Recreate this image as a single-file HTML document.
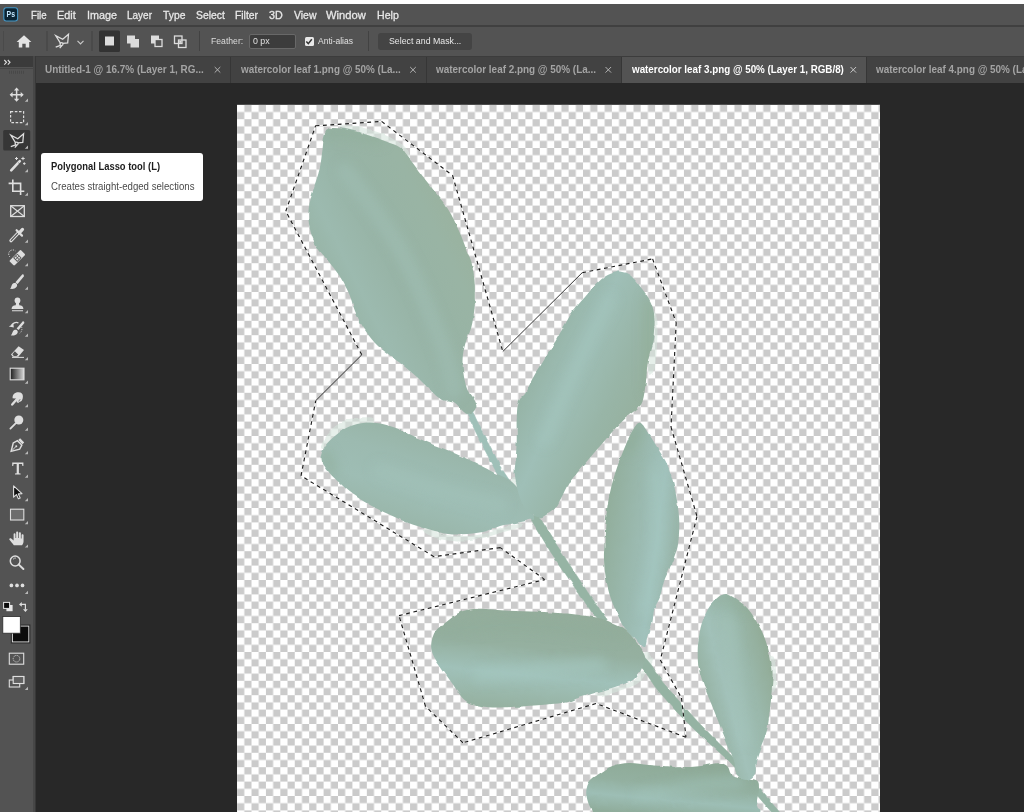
<!DOCTYPE html>
<html><head><meta charset="utf-8"><style>
*{margin:0;padding:0;box-sizing:border-box}
html,body{width:1024px;height:812px;overflow:hidden;background:#282828;font-family:"Liberation Sans",sans-serif;}
#root{position:relative;width:1024px;height:812px;overflow:hidden;background:#282828}
.abs{position:absolute}
.tx{position:absolute;white-space:nowrap;transform-origin:0 50%;line-height:1.15}
</style></head><body><div id="root">

<svg class="abs" style="left:0;top:0" width="1024" height="812" viewBox="0 0 1024 812">
<defs><pattern id="chk" x="237.1" y="104.8" width="14.414" height="14.4" patternUnits="userSpaceOnUse"><rect width="14.414" height="14.4" fill="#fff"/><rect x="7.207" width="7.207" height="7.2" fill="#cbcbcb"/><rect y="7.2" width="7.207" height="7.2" fill="#cbcbcb"/></pattern>
<clipPath id="cv"><rect x="237" y="104.8" width="643" height="708"/></clipPath>
<filter id="soft" x="-2%" y="-2%" width="104%" height="104%"><feTurbulence type="fractalNoise" baseFrequency="0.09" numOctaves="2" seed="4" result="n"/><feDisplacementMap in="SourceGraphic" in2="n" scale="3" xChannelSelector="R" yChannelSelector="G" result="d"/><feGaussianBlur in="d" stdDeviation="0.5"/></filter>
<filter id="blur4" filterUnits="userSpaceOnUse" x="200" y="80" width="720" height="760"><feGaussianBlur stdDeviation="6"/></filter>
<linearGradient id="g1" gradientUnits="userSpaceOnUse" x1="318" y1="300" x2="470" y2="225"><stop offset="0" stop-color="#94b0a0"/><stop offset="0.25" stop-color="#9cbaaf"/><stop offset="0.5" stop-color="#97b3a5"/><stop offset="0.8" stop-color="#99b4a4"/><stop offset="1" stop-color="#9ab29e"/></linearGradient>
<linearGradient id="g2" gradientUnits="userSpaceOnUse" x1="450" y1="420" x2="410" y2="540"><stop offset="0" stop-color="#95b0a0"/><stop offset="0.4" stop-color="#9cbab0"/><stop offset="0.65" stop-color="#9ebdb4"/><stop offset="1" stop-color="#97b3a5"/></linearGradient>
<linearGradient id="g3" gradientUnits="userSpaceOnUse" x1="520" y1="370" x2="650" y2="430"><stop offset="0" stop-color="#93b0a1"/><stop offset="0.35" stop-color="#9fbfb7"/><stop offset="0.65" stop-color="#98b5a7"/><stop offset="1" stop-color="#95ae9a"/></linearGradient>
<linearGradient id="g4" gradientUnits="userSpaceOnUse" x1="604" y1="530" x2="680" y2="540"><stop offset="0" stop-color="#92ae9c"/><stop offset="0.45" stop-color="#9bbab0"/><stop offset="0.7" stop-color="#a1c2bc"/><stop offset="1" stop-color="#97b3a6"/></linearGradient>
<linearGradient id="g5" gradientUnits="userSpaceOnUse" x1="540" y1="608" x2="530" y2="708"><stop offset="0" stop-color="#94ad9b"/><stop offset="0.4" stop-color="#95b0a0"/><stop offset="0.68" stop-color="#a0c1b9"/><stop offset="1" stop-color="#96b2a2"/></linearGradient>
<linearGradient id="g6" gradientUnits="userSpaceOnUse" x1="660" y1="762" x2="655" y2="815"><stop offset="0" stop-color="#8eaa97"/><stop offset="0.4" stop-color="#93b0a0"/><stop offset="0.7" stop-color="#9dbeb5"/><stop offset="1" stop-color="#90ad9c"/></linearGradient>
<linearGradient id="g7" gradientUnits="userSpaceOnUse" x1="698" y1="690" x2="772" y2="670"><stop offset="0" stop-color="#93af9e"/><stop offset="0.35" stop-color="#a2c1b9"/><stop offset="0.7" stop-color="#9ab8ab"/><stop offset="1" stop-color="#92ac98"/></linearGradient>
</defs>
<rect x="237" y="104.8" width="643" height="708" fill="url(#chk)"/>
<g clip-path="url(#cv)">
<g filter="url(#soft)">
<path d="M340.0 126.0 C342.5 125.3 352.5 125.5 360.0 127.0 C367.5 128.5 377.7 131.8 385.0 135.0 C392.3 138.2 399.8 142.2 404.0 146.0 C408.2 149.8 411.0 157.3 410.0 158.0 C409.0 158.7 404.7 153.3 398.0 150.0 C391.3 146.7 378.8 141.2 370.0 138.0 C361.2 134.8 350.0 133.0 345.0 131.0 C340.0 129.0 337.5 126.7 340.0 126.0Z" fill="#d6e4dc" opacity="0.6"/>
<path d="M321.0 447.0 C321.3 444.3 324.8 436.5 329.0 432.0 C333.2 427.5 339.2 422.4 346.0 420.0 C352.8 417.6 365.7 416.8 370.0 417.5 C374.3 418.2 375.3 422.2 372.0 424.0 C368.7 425.8 356.0 425.8 350.0 428.0 C344.0 430.2 339.8 433.7 336.0 437.0 C332.2 440.3 329.5 446.3 327.0 448.0 C324.5 449.7 320.7 449.7 321.0 447.0Z" fill="#d6e4dc" opacity="0.6"/>
<path d="M428.0 529.0 C431.8 529.3 441.2 533.8 447.8 535.0 C454.4 536.2 461.0 536.3 467.5 536.0 C474.0 535.7 480.8 534.5 487.0 533.0 C493.2 531.5 499.5 528.7 505.0 527.0 C510.5 525.3 517.3 523.0 520.0 523.0 C522.7 523.0 524.3 525.3 521.0 527.0 C517.7 528.7 508.5 530.7 500.0 533.0 C491.5 535.3 479.2 539.8 470.0 541.0 C460.8 542.2 452.5 541.3 445.0 540.0 C437.5 538.7 427.8 534.8 425.0 533.0 C422.2 531.2 424.2 528.7 428.0 529.0Z" fill="#d6e4dc" opacity="0.6"/>
<path d="M652.0 312.0 C653.0 308.3 656.2 312.5 657.0 318.0 C657.8 323.5 657.5 336.0 657.0 345.0 C656.5 354.0 655.5 367.5 654.0 372.0 C652.5 376.5 648.5 377.3 648.0 372.0 C647.5 366.7 650.3 350.0 651.0 340.0 C651.7 330.0 651.0 315.7 652.0 312.0Z" fill="#d6e4dc" opacity="0.6"/>
<path d="M598.0 692.0 C601.3 690.3 614.0 688.0 620.0 686.0 C626.0 684.0 630.3 682.5 634.0 680.0 C637.7 677.5 640.2 672.0 642.0 671.0 C643.8 670.0 645.8 671.8 645.0 674.0 C644.2 676.2 641.2 681.2 637.0 684.0 C632.8 686.8 626.2 688.5 620.0 690.5 C613.8 692.5 603.7 695.8 600.0 696.0 C596.3 696.2 594.7 693.7 598.0 692.0Z" fill="#d6e4dc" opacity="0.6"/>
<path d="M770.0 655.0 C770.5 653.3 774.0 657.0 775.0 662.0 C776.0 667.0 776.5 680.0 776.0 685.0 C775.5 690.0 772.7 694.2 772.0 692.0 C771.3 689.8 772.3 678.2 772.0 672.0 C771.7 665.8 769.5 656.7 770.0 655.0Z" fill="#d6e4dc" opacity="0.6"/>
<path d="M511.0 480.0 C511.5 478.5 515.7 477.0 517.0 478.0 C518.3 479.0 519.5 484.5 519.0 486.0 C518.5 487.5 515.3 488.0 514.0 487.0 C512.7 486.0 510.5 481.5 511.0 480.0Z" fill="#d6e4dc" opacity="0.6"/>
<path d="M642.0 655.0 C642.8 653.0 646.2 651.2 648.0 652.0 C649.8 652.8 653.0 657.3 653.0 660.0 C653.0 662.7 649.7 667.3 648.0 668.0 C646.3 668.7 644.0 666.2 643.0 664.0 C642.0 661.8 641.2 657.0 642.0 655.0Z" fill="#d6e4dc" opacity="0.6"/>
<path d="M465.3 410.3 L479.3 439.3 L494.4 468.5 L509.3 491.8 L514.7 488.2 L499.6 465.5 L484.7 436.7 L470.7 407.7Z" fill="#9fc0b8" stroke="#9fc0b8" stroke-width="0.6" stroke-linejoin="round"/>
<path d="M530.3 518.1 L532.4 521.7 L550.3 551.4 L580.7 596.3 L597.7 620.3 L600.8 624.4 L607.2 619.6 L604.3 615.7 L587.3 591.7 L557.7 546.6 L539.6 517.3 L537.7 513.9Z" fill="#96b4a4" stroke="#96b4a4" stroke-width="0.6" stroke-linejoin="round"/>
<path d="M637.6 663.0 L644.4 670.7 L656.1 688.3 L676.9 712.0 L694.6 729.8 L712.8 746.4 L729.0 760.9 L743.1 776.6 L746.9 773.4 L733.0 757.1 L717.2 741.6 L700.2 724.2 L683.5 706.0 L663.1 682.7 L651.6 665.3 L644.4 657.0Z" fill="#95b3a3" stroke="#95b3a3" stroke-width="0.6" stroke-linejoin="round"/>
<path d="M750.7 788.0 L763.7 803.0 L775.7 817.0 L780.3 813.0 L768.3 799.0 L755.3 784.0Z" fill="#97b5a6" stroke="#97b5a6" stroke-width="0.6" stroke-linejoin="round"/>
<clipPath id="lc0"><path d="M329.0 128.5 C333.1 127.5 342.3 128.5 349.0 129.7 C355.7 130.9 362.4 133.5 369.0 135.6 C375.6 137.7 383.3 140.5 388.5 142.5 C393.7 144.5 396.8 145.0 400.0 147.4 C403.2 149.8 403.3 151.1 408.0 157.0 C412.7 162.9 421.4 174.4 428.0 183.0 C434.6 191.6 442.4 200.3 447.6 208.5 C452.9 216.7 456.2 224.8 459.5 232.0 C462.8 239.2 465.3 247.0 467.3 252.0 C469.3 257.0 470.2 257.3 471.4 262.0 C472.6 266.7 473.8 274.5 474.4 280.0 C475.0 285.5 474.8 290.2 474.8 295.0 C474.8 299.8 475.0 303.7 474.4 309.0 C473.8 314.3 472.9 321.3 471.4 327.0 C469.9 332.7 467.0 337.8 465.5 343.0 C464.0 348.2 462.9 353.3 462.6 358.5 C462.3 363.7 462.7 368.8 463.5 374.0 C464.3 379.2 465.7 385.7 467.5 390.0 C469.3 394.3 472.9 397.3 474.4 400.0 C475.9 402.7 476.6 404.1 476.4 406.0 C476.2 407.9 474.9 410.4 473.4 411.7 C471.9 413.0 469.1 413.7 467.5 413.7 C465.9 413.7 465.8 413.6 463.5 411.7 C461.2 409.8 457.3 403.9 453.7 402.0 C450.1 400.1 445.9 402.0 442.0 400.0 C438.1 398.0 434.0 393.7 430.0 390.0 C426.0 386.3 422.3 381.9 418.0 378.0 C413.7 374.1 409.3 370.3 404.4 366.4 C399.5 362.5 393.6 358.5 388.7 354.6 C383.8 350.7 379.3 347.6 375.0 343.0 C370.7 338.4 366.3 332.3 363.0 327.0 C359.7 321.7 357.3 316.6 355.0 311.0 C352.7 305.4 351.6 299.4 349.0 293.5 C346.4 287.6 342.7 281.1 339.4 275.8 C336.1 270.6 332.8 267.0 329.0 262.0 C325.2 257.0 319.7 251.7 316.5 246.0 C313.3 240.3 311.0 234.2 309.7 228.0 C308.4 221.8 308.0 215.0 308.7 208.5 C309.4 202.0 311.8 195.4 313.6 188.8 C315.4 182.2 318.1 175.6 319.6 169.0 C321.1 162.4 321.7 155.0 322.5 149.4 C323.3 143.8 323.4 139.1 324.5 135.6 C325.6 132.1 324.9 129.5 329.0 128.5Z"/></clipPath>
<path d="M329.0 128.5 C333.1 127.5 342.3 128.5 349.0 129.7 C355.7 130.9 362.4 133.5 369.0 135.6 C375.6 137.7 383.3 140.5 388.5 142.5 C393.7 144.5 396.8 145.0 400.0 147.4 C403.2 149.8 403.3 151.1 408.0 157.0 C412.7 162.9 421.4 174.4 428.0 183.0 C434.6 191.6 442.4 200.3 447.6 208.5 C452.9 216.7 456.2 224.8 459.5 232.0 C462.8 239.2 465.3 247.0 467.3 252.0 C469.3 257.0 470.2 257.3 471.4 262.0 C472.6 266.7 473.8 274.5 474.4 280.0 C475.0 285.5 474.8 290.2 474.8 295.0 C474.8 299.8 475.0 303.7 474.4 309.0 C473.8 314.3 472.9 321.3 471.4 327.0 C469.9 332.7 467.0 337.8 465.5 343.0 C464.0 348.2 462.9 353.3 462.6 358.5 C462.3 363.7 462.7 368.8 463.5 374.0 C464.3 379.2 465.7 385.7 467.5 390.0 C469.3 394.3 472.9 397.3 474.4 400.0 C475.9 402.7 476.6 404.1 476.4 406.0 C476.2 407.9 474.9 410.4 473.4 411.7 C471.9 413.0 469.1 413.7 467.5 413.7 C465.9 413.7 465.8 413.6 463.5 411.7 C461.2 409.8 457.3 403.9 453.7 402.0 C450.1 400.1 445.9 402.0 442.0 400.0 C438.1 398.0 434.0 393.7 430.0 390.0 C426.0 386.3 422.3 381.9 418.0 378.0 C413.7 374.1 409.3 370.3 404.4 366.4 C399.5 362.5 393.6 358.5 388.7 354.6 C383.8 350.7 379.3 347.6 375.0 343.0 C370.7 338.4 366.3 332.3 363.0 327.0 C359.7 321.7 357.3 316.6 355.0 311.0 C352.7 305.4 351.6 299.4 349.0 293.5 C346.4 287.6 342.7 281.1 339.4 275.8 C336.1 270.6 332.8 267.0 329.0 262.0 C325.2 257.0 319.7 251.7 316.5 246.0 C313.3 240.3 311.0 234.2 309.7 228.0 C308.4 221.8 308.0 215.0 308.7 208.5 C309.4 202.0 311.8 195.4 313.6 188.8 C315.4 182.2 318.1 175.6 319.6 169.0 C321.1 162.4 321.7 155.0 322.5 149.4 C323.3 143.8 323.4 139.1 324.5 135.6 C325.6 132.1 324.9 129.5 329.0 128.5Z" fill="url(#g1)"/>
<clipPath id="lc1"><path d="M320.7 457.0 C321.2 454.1 323.1 448.9 325.6 445.3 C328.1 441.7 331.6 438.6 335.5 435.5 C339.4 432.4 344.4 428.7 349.3 426.6 C354.2 424.5 360.1 423.2 365.0 422.7 C369.9 422.1 373.9 422.5 378.8 423.3 C383.7 424.1 389.4 425.7 394.6 427.6 C399.9 429.5 404.7 432.0 410.3 434.5 C415.9 437.0 421.8 439.8 428.0 442.4 C434.2 445.0 441.2 447.4 447.8 450.2 C454.4 453.0 461.6 456.2 467.5 459.0 C473.4 461.8 478.4 464.5 483.3 467.0 C488.2 469.5 492.9 472.0 497.0 474.0 C501.1 476.0 504.8 477.0 508.0 479.0 C511.2 481.0 513.0 482.5 516.0 486.0 C519.0 489.5 523.0 494.7 526.0 500.0 C529.0 505.3 533.4 514.7 534.0 518.0 C534.6 521.3 532.6 519.2 529.6 520.0 C526.6 520.8 520.7 522.0 515.8 523.0 C510.9 524.0 504.8 524.7 500.0 526.0 C495.2 527.3 492.6 529.7 487.2 531.0 C481.8 532.3 474.1 533.5 467.5 534.0 C460.9 534.5 454.4 534.8 447.8 534.0 C441.2 533.2 434.6 530.8 428.0 529.0 C421.4 527.2 414.9 525.5 408.4 523.0 C401.8 520.5 395.3 517.4 388.7 514.3 C382.1 511.2 374.9 507.7 369.0 504.4 C363.1 501.1 358.1 498.2 353.2 494.6 C348.3 491.0 343.3 486.4 339.4 482.8 C335.5 479.2 332.4 476.2 329.6 472.9 C326.8 469.6 324.2 465.6 322.7 463.0 C321.2 460.4 320.2 459.9 320.7 457.0Z"/></clipPath>
<path d="M320.7 457.0 C321.2 454.1 323.1 448.9 325.6 445.3 C328.1 441.7 331.6 438.6 335.5 435.5 C339.4 432.4 344.4 428.7 349.3 426.6 C354.2 424.5 360.1 423.2 365.0 422.7 C369.9 422.1 373.9 422.5 378.8 423.3 C383.7 424.1 389.4 425.7 394.6 427.6 C399.9 429.5 404.7 432.0 410.3 434.5 C415.9 437.0 421.8 439.8 428.0 442.4 C434.2 445.0 441.2 447.4 447.8 450.2 C454.4 453.0 461.6 456.2 467.5 459.0 C473.4 461.8 478.4 464.5 483.3 467.0 C488.2 469.5 492.9 472.0 497.0 474.0 C501.1 476.0 504.8 477.0 508.0 479.0 C511.2 481.0 513.0 482.5 516.0 486.0 C519.0 489.5 523.0 494.7 526.0 500.0 C529.0 505.3 533.4 514.7 534.0 518.0 C534.6 521.3 532.6 519.2 529.6 520.0 C526.6 520.8 520.7 522.0 515.8 523.0 C510.9 524.0 504.8 524.7 500.0 526.0 C495.2 527.3 492.6 529.7 487.2 531.0 C481.8 532.3 474.1 533.5 467.5 534.0 C460.9 534.5 454.4 534.8 447.8 534.0 C441.2 533.2 434.6 530.8 428.0 529.0 C421.4 527.2 414.9 525.5 408.4 523.0 C401.8 520.5 395.3 517.4 388.7 514.3 C382.1 511.2 374.9 507.7 369.0 504.4 C363.1 501.1 358.1 498.2 353.2 494.6 C348.3 491.0 343.3 486.4 339.4 482.8 C335.5 479.2 332.4 476.2 329.6 472.9 C326.8 469.6 324.2 465.6 322.7 463.0 C321.2 460.4 320.2 459.9 320.7 457.0Z" fill="url(#g2)"/>
<clipPath id="lc2"><path d="M615.0 272.6 C617.5 271.9 618.4 271.2 621.0 271.7 C623.6 272.2 627.2 272.9 630.5 275.5 C633.8 278.1 637.2 282.6 640.6 287.0 C644.0 291.4 648.5 297.1 650.8 302.2 C653.1 307.3 654.0 311.5 654.4 317.4 C654.8 323.3 654.0 332.0 653.3 337.8 C652.6 343.6 651.0 347.7 650.0 352.0 C649.0 356.3 648.3 358.2 647.6 363.4 C646.9 368.6 646.5 376.8 645.7 383.0 C644.9 389.2 644.1 396.3 642.8 400.5 C641.5 404.7 640.8 405.1 638.0 408.0 C635.2 410.9 630.0 414.1 626.0 417.7 C622.0 421.3 618.2 425.3 614.3 429.6 C610.4 433.9 606.5 438.7 602.5 443.3 C598.5 447.9 594.6 452.4 590.6 457.0 C586.6 461.6 582.6 466.4 578.8 471.0 C575.0 475.6 571.0 480.1 568.0 484.7 C565.0 489.3 563.2 494.6 561.0 498.5 C558.8 502.4 557.3 505.8 555.0 508.4 C552.7 511.0 549.9 512.8 547.3 514.3 C544.7 515.8 542.6 517.6 539.4 517.2 C536.2 516.8 531.2 515.2 528.0 512.0 C524.8 508.8 522.2 504.2 520.0 498.0 C517.8 491.8 515.5 481.5 514.8 475.0 C514.1 468.5 515.5 464.9 515.8 459.0 C516.1 453.1 516.6 445.9 516.7 439.4 C516.9 432.8 516.4 425.9 516.7 419.7 C517.0 413.5 517.0 406.4 518.5 402.0 C520.0 397.6 523.0 397.1 525.5 393.0 C528.0 388.9 530.3 382.5 533.3 377.2 C536.2 371.9 539.9 366.7 543.2 361.4 C546.5 356.1 549.7 351.2 553.0 345.6 C556.3 340.0 559.7 333.7 563.0 328.0 C566.3 322.3 569.2 316.3 572.8 311.2 C576.4 306.1 580.7 301.9 584.6 297.4 C588.5 292.9 592.8 287.6 596.4 284.0 C600.0 280.4 602.9 277.9 606.0 276.0 C609.1 274.1 612.5 273.3 615.0 272.6Z"/></clipPath>
<path d="M615.0 272.6 C617.5 271.9 618.4 271.2 621.0 271.7 C623.6 272.2 627.2 272.9 630.5 275.5 C633.8 278.1 637.2 282.6 640.6 287.0 C644.0 291.4 648.5 297.1 650.8 302.2 C653.1 307.3 654.0 311.5 654.4 317.4 C654.8 323.3 654.0 332.0 653.3 337.8 C652.6 343.6 651.0 347.7 650.0 352.0 C649.0 356.3 648.3 358.2 647.6 363.4 C646.9 368.6 646.5 376.8 645.7 383.0 C644.9 389.2 644.1 396.3 642.8 400.5 C641.5 404.7 640.8 405.1 638.0 408.0 C635.2 410.9 630.0 414.1 626.0 417.7 C622.0 421.3 618.2 425.3 614.3 429.6 C610.4 433.9 606.5 438.7 602.5 443.3 C598.5 447.9 594.6 452.4 590.6 457.0 C586.6 461.6 582.6 466.4 578.8 471.0 C575.0 475.6 571.0 480.1 568.0 484.7 C565.0 489.3 563.2 494.6 561.0 498.5 C558.8 502.4 557.3 505.8 555.0 508.4 C552.7 511.0 549.9 512.8 547.3 514.3 C544.7 515.8 542.6 517.6 539.4 517.2 C536.2 516.8 531.2 515.2 528.0 512.0 C524.8 508.8 522.2 504.2 520.0 498.0 C517.8 491.8 515.5 481.5 514.8 475.0 C514.1 468.5 515.5 464.9 515.8 459.0 C516.1 453.1 516.6 445.9 516.7 439.4 C516.9 432.8 516.4 425.9 516.7 419.7 C517.0 413.5 517.0 406.4 518.5 402.0 C520.0 397.6 523.0 397.1 525.5 393.0 C528.0 388.9 530.3 382.5 533.3 377.2 C536.2 371.9 539.9 366.7 543.2 361.4 C546.5 356.1 549.7 351.2 553.0 345.6 C556.3 340.0 559.7 333.7 563.0 328.0 C566.3 322.3 569.2 316.3 572.8 311.2 C576.4 306.1 580.7 301.9 584.6 297.4 C588.5 292.9 592.8 287.6 596.4 284.0 C600.0 280.4 602.9 277.9 606.0 276.0 C609.1 274.1 612.5 273.3 615.0 272.6Z" fill="url(#g3)"/>
<clipPath id="lc3"><path d="M640.0 422.7 C643.0 423.4 646.5 430.8 649.8 435.5 C653.1 440.2 656.6 446.3 659.6 451.2 C662.6 456.1 665.2 459.7 667.5 465.0 C669.8 470.3 671.8 476.6 673.4 482.8 C675.0 489.1 676.3 495.9 677.3 502.5 C678.3 509.1 679.1 515.6 679.3 522.2 C679.5 528.8 678.8 536.9 678.3 541.9 C677.8 546.9 677.4 547.7 676.0 552.0 C674.6 556.3 672.0 562.7 670.0 567.6 C668.0 572.5 665.7 576.5 664.0 581.4 C662.3 586.3 661.6 592.4 660.0 597.0 C658.4 601.6 655.6 604.7 654.3 609.0 C653.0 613.3 653.4 618.2 652.3 622.8 C651.1 627.4 648.7 632.4 647.4 636.6 C646.1 640.8 646.3 647.4 644.4 648.0 C642.5 648.6 639.3 643.2 636.0 640.0 C632.7 636.8 627.7 632.9 624.7 628.7 C621.7 624.5 620.1 620.0 617.8 615.0 C615.5 610.0 613.0 604.9 611.0 599.0 C609.0 593.1 607.2 585.9 606.0 579.4 C604.8 572.9 604.3 565.3 604.0 559.7 C603.7 554.1 604.2 551.4 604.4 545.8 C604.6 540.2 604.9 532.6 605.4 526.0 C605.9 519.4 606.4 512.9 607.4 506.4 C608.4 499.8 609.7 493.3 611.3 486.7 C612.9 480.1 615.1 473.2 617.2 467.0 C619.3 460.8 621.5 455.2 624.0 449.3 C626.5 443.4 629.3 435.9 632.0 431.5 C634.7 427.1 637.0 422.0 640.0 422.7Z"/></clipPath>
<path d="M640.0 422.7 C643.0 423.4 646.5 430.8 649.8 435.5 C653.1 440.2 656.6 446.3 659.6 451.2 C662.6 456.1 665.2 459.7 667.5 465.0 C669.8 470.3 671.8 476.6 673.4 482.8 C675.0 489.1 676.3 495.9 677.3 502.5 C678.3 509.1 679.1 515.6 679.3 522.2 C679.5 528.8 678.8 536.9 678.3 541.9 C677.8 546.9 677.4 547.7 676.0 552.0 C674.6 556.3 672.0 562.7 670.0 567.6 C668.0 572.5 665.7 576.5 664.0 581.4 C662.3 586.3 661.6 592.4 660.0 597.0 C658.4 601.6 655.6 604.7 654.3 609.0 C653.0 613.3 653.4 618.2 652.3 622.8 C651.1 627.4 648.7 632.4 647.4 636.6 C646.1 640.8 646.3 647.4 644.4 648.0 C642.5 648.6 639.3 643.2 636.0 640.0 C632.7 636.8 627.7 632.9 624.7 628.7 C621.7 624.5 620.1 620.0 617.8 615.0 C615.5 610.0 613.0 604.9 611.0 599.0 C609.0 593.1 607.2 585.9 606.0 579.4 C604.8 572.9 604.3 565.3 604.0 559.7 C603.7 554.1 604.2 551.4 604.4 545.8 C604.6 540.2 604.9 532.6 605.4 526.0 C605.9 519.4 606.4 512.9 607.4 506.4 C608.4 499.8 609.7 493.3 611.3 486.7 C612.9 480.1 615.1 473.2 617.2 467.0 C619.3 460.8 621.5 455.2 624.0 449.3 C626.5 443.4 629.3 435.9 632.0 431.5 C634.7 427.1 637.0 422.0 640.0 422.7Z" fill="url(#g4)"/>
<clipPath id="lc4"><path d="M431.4 643.2 C432.0 639.9 432.7 635.0 435.3 631.4 C437.9 627.8 442.7 624.8 447.0 621.5 C451.3 618.2 455.6 613.8 460.9 611.7 C466.2 609.6 470.8 608.9 478.7 608.7 C486.6 608.5 498.4 610.2 508.2 610.7 C518.0 611.2 527.9 611.2 537.8 611.7 C547.6 612.2 558.6 612.8 567.3 613.6 C576.0 614.4 583.9 615.5 590.0 616.5 C596.1 617.5 600.0 618.2 604.0 619.5 C608.0 620.8 610.3 622.2 614.0 624.0 C617.7 625.8 622.4 627.6 626.0 630.5 C629.6 633.4 632.9 637.6 635.7 641.2 C638.5 644.8 641.5 649.0 643.0 652.0 C644.5 655.0 645.3 656.0 645.0 659.0 C644.7 662.0 643.0 666.5 641.0 670.0 C639.0 673.5 636.7 677.4 633.0 680.0 C629.3 682.6 624.5 683.8 618.8 685.8 C613.1 687.8 605.6 689.7 599.0 691.7 C592.4 693.7 584.7 695.8 579.4 697.6 C574.1 699.4 574.2 701.0 567.3 702.3 C560.4 703.6 547.6 704.5 537.8 705.3 C527.9 706.1 516.4 706.9 508.2 707.2 C500.0 707.5 494.4 707.7 488.5 707.2 C482.6 706.7 477.1 705.8 472.8 704.3 C468.5 702.8 466.2 701.7 462.9 698.4 C459.6 695.1 456.3 689.2 453.0 684.6 C449.7 680.0 446.1 675.1 443.2 670.8 C440.2 666.5 437.2 662.3 435.3 659.0 C433.4 655.7 432.5 653.6 431.8 651.0 C431.1 648.4 430.8 646.5 431.4 643.2Z"/></clipPath>
<path d="M431.4 643.2 C432.0 639.9 432.7 635.0 435.3 631.4 C437.9 627.8 442.7 624.8 447.0 621.5 C451.3 618.2 455.6 613.8 460.9 611.7 C466.2 609.6 470.8 608.9 478.7 608.7 C486.6 608.5 498.4 610.2 508.2 610.7 C518.0 611.2 527.9 611.2 537.8 611.7 C547.6 612.2 558.6 612.8 567.3 613.6 C576.0 614.4 583.9 615.5 590.0 616.5 C596.1 617.5 600.0 618.2 604.0 619.5 C608.0 620.8 610.3 622.2 614.0 624.0 C617.7 625.8 622.4 627.6 626.0 630.5 C629.6 633.4 632.9 637.6 635.7 641.2 C638.5 644.8 641.5 649.0 643.0 652.0 C644.5 655.0 645.3 656.0 645.0 659.0 C644.7 662.0 643.0 666.5 641.0 670.0 C639.0 673.5 636.7 677.4 633.0 680.0 C629.3 682.6 624.5 683.8 618.8 685.8 C613.1 687.8 605.6 689.7 599.0 691.7 C592.4 693.7 584.7 695.8 579.4 697.6 C574.1 699.4 574.2 701.0 567.3 702.3 C560.4 703.6 547.6 704.5 537.8 705.3 C527.9 706.1 516.4 706.9 508.2 707.2 C500.0 707.5 494.4 707.7 488.5 707.2 C482.6 706.7 477.1 705.8 472.8 704.3 C468.5 702.8 466.2 701.7 462.9 698.4 C459.6 695.1 456.3 689.2 453.0 684.6 C449.7 680.0 446.1 675.1 443.2 670.8 C440.2 666.5 437.2 662.3 435.3 659.0 C433.4 655.7 432.5 653.6 431.8 651.0 C431.1 648.4 430.8 646.5 431.4 643.2Z" fill="url(#g5)"/>
<clipPath id="lc5"><path d="M586.3 791.0 C586.6 787.7 587.5 784.2 589.7 781.3 C591.9 778.4 595.8 775.9 599.6 773.4 C603.4 770.9 607.5 767.7 612.4 766.0 C617.3 764.3 622.9 763.2 629.0 763.0 C635.1 762.8 642.0 764.4 648.8 765.0 C655.6 765.6 665.0 766.1 670.0 766.5 C675.0 766.9 674.2 767.3 679.0 767.3 C683.8 767.3 692.2 767.0 698.8 766.3 C705.4 765.6 713.7 763.3 718.5 763.3 C723.3 763.3 725.3 764.5 727.4 766.3 C729.5 768.1 729.2 772.0 731.0 774.0 C732.8 776.0 733.8 777.0 738.0 778.0 C742.2 779.0 752.5 778.3 756.0 780.0 C759.5 781.7 758.8 784.7 759.0 788.0 C759.2 791.3 758.5 792.2 757.0 800.0 C755.5 807.8 776.2 829.2 750.0 835.0 C723.8 840.8 626.3 838.8 600.0 835.0 C573.7 831.2 594.0 817.7 592.0 812.0 C590.0 806.3 588.7 804.5 587.7 801.0 C586.8 797.5 586.0 794.3 586.3 791.0Z"/></clipPath>
<path d="M586.3 791.0 C586.6 787.7 587.5 784.2 589.7 781.3 C591.9 778.4 595.8 775.9 599.6 773.4 C603.4 770.9 607.5 767.7 612.4 766.0 C617.3 764.3 622.9 763.2 629.0 763.0 C635.1 762.8 642.0 764.4 648.8 765.0 C655.6 765.6 665.0 766.1 670.0 766.5 C675.0 766.9 674.2 767.3 679.0 767.3 C683.8 767.3 692.2 767.0 698.8 766.3 C705.4 765.6 713.7 763.3 718.5 763.3 C723.3 763.3 725.3 764.5 727.4 766.3 C729.5 768.1 729.2 772.0 731.0 774.0 C732.8 776.0 733.8 777.0 738.0 778.0 C742.2 779.0 752.5 778.3 756.0 780.0 C759.5 781.7 758.8 784.7 759.0 788.0 C759.2 791.3 758.5 792.2 757.0 800.0 C755.5 807.8 776.2 829.2 750.0 835.0 C723.8 840.8 626.3 838.8 600.0 835.0 C573.7 831.2 594.0 817.7 592.0 812.0 C590.0 806.3 588.7 804.5 587.7 801.0 C586.8 797.5 586.0 794.3 586.3 791.0Z" fill="url(#g6)"/>
<clipPath id="lc6"><path d="M726.0 594.0 C728.2 594.0 729.4 595.1 732.0 596.6 C734.6 598.1 738.7 600.8 741.5 603.0 C744.3 605.2 746.2 606.7 748.6 609.6 C751.0 612.5 753.5 616.7 755.7 620.2 C757.9 623.7 759.8 627.0 761.6 630.8 C763.4 634.5 764.9 638.6 766.3 642.7 C767.7 646.9 768.9 651.0 769.9 655.7 C770.9 660.4 772.2 665.1 772.5 671.0 C772.8 676.9 772.2 684.3 771.7 691.0 C771.2 697.7 770.6 704.3 769.8 711.0 C769.0 717.7 768.3 725.1 766.8 731.0 C765.3 736.9 762.8 741.4 761.0 746.6 C759.2 751.8 757.0 757.4 756.0 762.0 C755.0 766.6 756.7 771.0 755.0 774.0 C753.3 777.0 749.1 780.0 746.0 780.0 C742.9 780.0 738.2 777.0 736.3 774.0 C734.3 771.0 735.6 766.6 734.3 762.0 C733.0 757.4 730.7 752.4 728.4 746.6 C726.1 740.8 723.1 733.6 720.5 727.0 C717.9 720.4 715.2 713.6 712.6 707.0 C710.0 700.4 707.0 694.0 704.7 687.5 C702.4 681.0 700.0 674.1 698.8 668.0 C697.6 661.9 697.7 656.2 697.7 651.0 C697.7 645.8 698.4 641.3 699.0 637.0 C699.6 632.7 700.1 629.0 701.3 625.0 C702.5 621.0 704.2 616.6 706.0 613.0 C707.8 609.4 709.8 606.3 712.0 603.6 C714.2 600.9 716.7 598.2 719.0 596.6 C721.3 595.0 723.8 594.0 726.0 594.0Z"/></clipPath>
<path d="M726.0 594.0 C728.2 594.0 729.4 595.1 732.0 596.6 C734.6 598.1 738.7 600.8 741.5 603.0 C744.3 605.2 746.2 606.7 748.6 609.6 C751.0 612.5 753.5 616.7 755.7 620.2 C757.9 623.7 759.8 627.0 761.6 630.8 C763.4 634.5 764.9 638.6 766.3 642.7 C767.7 646.9 768.9 651.0 769.9 655.7 C770.9 660.4 772.2 665.1 772.5 671.0 C772.8 676.9 772.2 684.3 771.7 691.0 C771.2 697.7 770.6 704.3 769.8 711.0 C769.0 717.7 768.3 725.1 766.8 731.0 C765.3 736.9 762.8 741.4 761.0 746.6 C759.2 751.8 757.0 757.4 756.0 762.0 C755.0 766.6 756.7 771.0 755.0 774.0 C753.3 777.0 749.1 780.0 746.0 780.0 C742.9 780.0 738.2 777.0 736.3 774.0 C734.3 771.0 735.6 766.6 734.3 762.0 C733.0 757.4 730.7 752.4 728.4 746.6 C726.1 740.8 723.1 733.6 720.5 727.0 C717.9 720.4 715.2 713.6 712.6 707.0 C710.0 700.4 707.0 694.0 704.7 687.5 C702.4 681.0 700.0 674.1 698.8 668.0 C697.6 661.9 697.7 656.2 697.7 651.0 C697.7 645.8 698.4 641.3 699.0 637.0 C699.6 632.7 700.1 629.0 701.3 625.0 C702.5 621.0 704.2 616.6 706.0 613.0 C707.8 609.4 709.8 606.3 712.0 603.6 C714.2 600.9 716.7 598.2 719.0 596.6 C721.3 595.0 723.8 594.0 726.0 594.0Z" fill="url(#g7)"/>
</g>
<g clip-path="url(#lc0)"><path d="M345.0 170.0 C354.2 183.3 384.2 221.7 400.0 250.0 C415.8 278.3 430.8 316.7 440.0 340.0 C449.2 363.3 452.5 381.7 455.0 390.0" fill="none" stroke="#a6c6be" stroke-width="16" stroke-linecap="round" opacity="0.4" filter="url(#blur4)"/></g>
<g clip-path="url(#lc0)"><path d="M328.0 135.0 C330.0 134.5 331.3 131.2 340.0 132.0 C348.7 132.8 373.3 138.7 380.0 140.0" fill="none" stroke="#90ad98" stroke-width="10" stroke-linecap="round" opacity="0.5" filter="url(#blur4)"/></g>
<g clip-path="url(#lc1)"><path d="M380.0 470.0 C390.0 473.3 420.0 484.2 440.0 490.0 C460.0 495.8 490.0 502.5 500.0 505.0" fill="none" stroke="#a5c6be" stroke-width="16" stroke-linecap="round" opacity="0.4" filter="url(#blur4)"/></g>
<g clip-path="url(#lc1)"><path d="M325.0 455.0 C326.2 457.5 330.8 467.5 332.0 470.0" fill="none" stroke="#8eab96" stroke-width="12" stroke-linecap="round" opacity="0.5" filter="url(#blur4)"/></g>
<g clip-path="url(#lc2)"><path d="M610.0 300.0 C604.2 311.7 585.8 346.7 575.0 370.0 C564.2 393.3 550.0 428.3 545.0 440.0" fill="none" stroke="#a6c8c0" stroke-width="14" stroke-linecap="round" opacity="0.45" filter="url(#blur4)"/></g>
<g clip-path="url(#lc2)"><path d="M648.0 300.0 C648.0 315.0 648.0 375.0 648.0 390.0" fill="none" stroke="#90ab93" stroke-width="8" stroke-linecap="round" opacity="0.5" filter="url(#blur4)"/></g>
<g clip-path="url(#lc3)"><path d="M655.0 470.0 C655.5 481.7 659.7 516.7 658.0 540.0 C656.3 563.3 647.2 598.3 645.0 610.0" fill="none" stroke="#a6c9c2" stroke-width="12" stroke-linecap="round" opacity="0.5" filter="url(#blur4)"/></g>
<g clip-path="url(#lc3)"><path d="M640.0 428.0 C638.0 431.7 630.0 446.3 628.0 450.0" fill="none" stroke="#8daa94" stroke-width="10" stroke-linecap="round" opacity="0.5" filter="url(#blur4)"/></g>
<g clip-path="url(#lc4)"><path d="M480.0 675.0 C490.0 674.2 520.0 671.7 540.0 670.0 C560.0 668.3 590.0 665.8 600.0 665.0" fill="none" stroke="#a6c9c2" stroke-width="14" stroke-linecap="round" opacity="0.55" filter="url(#blur4)"/></g>
<g clip-path="url(#lc4)"><path d="M440.0 630.0 C453.3 629.2 490.0 624.2 520.0 625.0 C550.0 625.8 603.3 633.3 620.0 635.0" fill="none" stroke="#8eab98" stroke-width="10" stroke-linecap="round" opacity="0.45" filter="url(#blur4)"/></g>
<g clip-path="url(#lc5)"><path d="M640.0 795.0 C650.0 793.3 683.3 787.2 700.0 785.0 C716.7 782.8 733.3 782.5 740.0 782.0" fill="none" stroke="#a3c6be" stroke-width="10" stroke-linecap="round" opacity="0.55" filter="url(#blur4)"/></g>
<g clip-path="url(#lc6)"><path d="M728.0 620.0 C729.2 630.0 732.2 660.0 735.0 680.0 C737.8 700.0 743.3 730.0 745.0 740.0" fill="none" stroke="#a8c9c1" stroke-width="10" stroke-linecap="round" opacity="0.5" filter="url(#blur4)"/></g>
<g clip-path="url(#lc6)"><path d="M712.0 605.0 C714.3 603.7 720.5 596.5 726.0 597.0 C731.5 597.5 741.8 606.2 745.0 608.0" fill="none" stroke="#8ca892" stroke-width="7" stroke-linecap="round" opacity="0.55" filter="url(#blur4)"/></g>
</g>
<path d="M315.6 125.8 L381.6 121.4 M381.6 121.4 L452.6 175.5 M452.6 175.5 L502.8 351.5 M582.2 272.7 L652.6 258.9 M652.6 258.9 L676.2 322.5 M676.2 322.5 L671.0 427.0 M671.0 427.0 L697.0 516.5 M697.0 516.5 L660.3 660.0 M660.3 660.0 L681.5 698.0 M681.5 698.0 L686.0 737.3 M686.0 737.3 L596.0 703.5 M596.0 703.5 L463.0 742.8 M463.0 742.8 L425.5 706.3 M425.5 706.3 L399.0 615.6 M399.0 615.6 L544.8 579.6 M544.8 579.6 L500.3 547.6 M500.3 547.6 L434.0 556.7 M434.0 556.7 L301.0 475.8 M301.0 475.8 L315.8 400.6 M361.8 354.8 L285.8 211.2 M285.8 211.2 L315.6 125.8 " fill="none" stroke="#fff" stroke-width="1.1"/>
<path d="M315.6 125.8 L381.6 121.4 M381.6 121.4 L452.6 175.5 M452.6 175.5 L502.8 351.5 M582.2 272.7 L652.6 258.9 M652.6 258.9 L676.2 322.5 M676.2 322.5 L671.0 427.0 M671.0 427.0 L697.0 516.5 M697.0 516.5 L660.3 660.0 M660.3 660.0 L681.5 698.0 M681.5 698.0 L686.0 737.3 M686.0 737.3 L596.0 703.5 M596.0 703.5 L463.0 742.8 M463.0 742.8 L425.5 706.3 M425.5 706.3 L399.0 615.6 M399.0 615.6 L544.8 579.6 M544.8 579.6 L500.3 547.6 M500.3 547.6 L434.0 556.7 M434.0 556.7 L301.0 475.8 M301.0 475.8 L315.8 400.6 M361.8 354.8 L285.8 211.2 M285.8 211.2 L315.6 125.8 " fill="none" stroke="#1a1a1a" stroke-width="1.15" stroke-dasharray="3.8 3.6"/>
<path d="M502.8 351.5 L582.2 272.7 M315.8 400.6 L361.8 354.8 " fill="none" stroke="#333" stroke-width="1"/>
</svg>
<div class="abs" style="left:0px;top:0px;width:1024px;height:4px;background:#fff;"></div>
<div class="abs" style="left:0px;top:4px;width:1024px;height:22px;background:#535353;"></div>
<div class="abs" style="left:0px;top:25.4px;width:1024px;height:1.4px;background:#404040;"></div>
<div class="abs" style="left:0px;top:27px;width:1024px;height:29px;background:#535353;"></div>
<div class="abs" style="left:0px;top:55.8px;width:1024px;height:1.2px;background:#3c3c3c;"></div>
<div class="abs" style="left:35.8px;top:56.9px;width:989px;height:25.8px;background:#424242;"></div>
<div class="abs" style="left:621.5px;top:56.9px;width:244.5px;height:25.8px;background:#535353;"></div>
<div class="abs" style="left:230px;top:56.9px;width:1px;height:25.8px;background:#363636;"></div>
<div class="abs" style="left:425.7px;top:56.9px;width:1px;height:25.8px;background:#363636;"></div>
<div class="abs" style="left:621px;top:56.9px;width:1px;height:25.8px;background:#363636;"></div>
<div class="abs" style="left:866px;top:56.9px;width:1px;height:25.8px;background:#363636;"></div>
<div class="abs" style="left:0px;top:56px;width:33.2px;height:756px;background:#535353;"></div>
<div class="abs" style="left:33.2px;top:56px;width:2px;height:756px;background:#474747;"></div>
<div class="abs" style="left:35.1px;top:56px;width:0.8px;height:756px;background:#383838;"></div>
<div class="abs" style="left:0px;top:56.2px;width:33.2px;height:11.3px;background:#3b3b3b;"></div>
<div class="abs" style="left:0px;top:67.5px;width:33.2px;height:0.8px;background:#464646;"></div>
<div class="abs" style="left:198.5px;top:31px;width:1px;height:20px;background:#424242;"></div>
<div class="abs" style="left:367.5px;top:31px;width:1px;height:20px;background:#424242;"></div>
<div class="abs" style="left:248.5px;top:33.5px;width:47px;height:15px;background:#3c3c3c;border:1px solid #686868;border-radius:2px"></div>
<div class="abs" style="left:304.5px;top:37px;width:9px;height:9px;background:#e8e8e8;border-radius:1.5px"></div>
<div class="abs" style="left:377.5px;top:32.5px;width:94.5px;height:17.5px;background:#444;border-radius:3px"></div>
<div class="abs" style="left:41px;top:153px;width:162px;height:48px;background:#fff;border-radius:3px"></div>
<svg class="abs" style="left:0;top:0" width="1024" height="812" viewBox="0 0 1024 812">
<defs><linearGradient id="gr" x1="0" x2="1"><stop offset="0" stop-color="#1c1c1c"/><stop offset="1" stop-color="#d8d8d8"/></linearGradient></defs>
<rect x="3.8" y="7.8" width="13.8" height="13.2" rx="2.5" fill="#0b2433" stroke="#4597c6" stroke-width="1.1"/>
<text x="6.6" y="17" font-family="Liberation Sans" font-weight="bold" font-size="9" fill="#c4e8ff" textLength="8.4" lengthAdjust="spacingAndGlyphs">Ps</text>
<rect x="3" y="31" width="1" height="20" fill="#4a4a4a"/>
<path d="M24 35.2 L16.6 42 H18.8 V47.6 H22.3 V43.8 H25.7 V47.6 H29.2 V42 H31.4 Z" fill="#e4e4e4"/>
<rect x="46.5" y="31" width="1" height="20" fill="#424242"/>
<g transform="translate(54.5 33.5) scale(1.00)" fill="none" stroke="#dedede" stroke-width="1.25" stroke-linejoin="miter"><path d="M6.2 10.2 L1.2 2.2 L8.2 5.8 L14 0.8 L13.2 9.4 L8.4 9.8"/><circle cx="7" cy="10.6" r="1.5"/><path d="M6 11.8 L1.2 13.6 M7.4 12 L5.2 14.6"/></g>
<path d="M77.5 40.8 L80.5 43.8 L83.5 40.8" fill="none" stroke="#c8c8c8" stroke-width="1.2"/>
<rect x="91.5" y="31" width="1" height="20" fill="#424242"/>
<rect x="99" y="30.5" width="21" height="21.5" rx="1.5" fill="#333"/>
<rect x="105" y="36.5" width="9" height="9" fill="#dcdcdc"/>
<rect x="127" y="35.5" width="8" height="8" fill="#dcdcdc"/><rect x="130.5" y="39" width="8.5" height="8.5" fill="#dcdcdc"/>
<rect x="151" y="35.5" width="8" height="8" fill="#dcdcdc"/><rect x="155" y="39.5" width="7" height="7" fill="#535353" stroke="#dcdcdc" stroke-width="1.3"/>
<rect x="174.5" y="36" width="7.5" height="7.5" fill="none" stroke="#dcdcdc" stroke-width="1.3"/><rect x="178.5" y="40" width="7.5" height="7.5" fill="none" stroke="#dcdcdc" stroke-width="1.3"/><rect x="179.2" y="40.7" width="2.2" height="2.2" fill="#dcdcdc"/>
<path d="M306.3 41.5 L308.3 43.6 L311.8 39.2" fill="none" stroke="#333" stroke-width="1.5"/>
<path d="M214.7 67 l5.6 5.6 m0 -5.6 l-5.6 5.6" stroke="#b4b4b4" stroke-width="1" fill="none"/>
<path d="M410.2 67 l5.6 5.6 m0 -5.6 l-5.6 5.6" stroke="#b4b4b4" stroke-width="1" fill="none"/>
<path d="M605.5 67 l5.6 5.6 m0 -5.6 l-5.6 5.6" stroke="#b4b4b4" stroke-width="1" fill="none"/>
<path d="M850.5 67 l5.6 5.6 m0 -5.6 l-5.6 5.6" stroke="#c8c8c8" stroke-width="1" fill="none"/>
<path d="M4.3 60 l2.2 2.3 l-2.2 2.3 M7.8 60 l2.2 2.3 l-2.2 2.3" stroke="#e0e0e0" stroke-width="1.1" fill="none"/>
<path d="M9 72.3 h16" stroke="#484848" stroke-width="3" stroke-dasharray="1 1"/>
<rect x="3.2" y="130" width="27" height="20.6" rx="1.5" fill="#363636"/>
<path d="M28 101.7 v-3.2 l-3.2 3.2z" fill="#b8b8b8"/>
<path d="M28 125.2 v-3.2 l-3.2 3.2z" fill="#b8b8b8"/>
<path d="M28 148.7 v-3.2 l-3.2 3.2z" fill="#b8b8b8"/>
<path d="M28 172.2 v-3.2 l-3.2 3.2z" fill="#b8b8b8"/>
<path d="M28 195.7 v-3.2 l-3.2 3.2z" fill="#b8b8b8"/>
<path d="M28 242.7 v-3.2 l-3.2 3.2z" fill="#b8b8b8"/>
<path d="M28 266.2 v-3.2 l-3.2 3.2z" fill="#b8b8b8"/>
<path d="M28 289.7 v-3.2 l-3.2 3.2z" fill="#b8b8b8"/>
<path d="M28 313.2 v-3.2 l-3.2 3.2z" fill="#b8b8b8"/>
<path d="M28 336.7 v-3.2 l-3.2 3.2z" fill="#b8b8b8"/>
<path d="M28 360.2 v-3.2 l-3.2 3.2z" fill="#b8b8b8"/>
<path d="M28 383.7 v-3.2 l-3.2 3.2z" fill="#b8b8b8"/>
<path d="M28 407.2 v-3.2 l-3.2 3.2z" fill="#b8b8b8"/>
<path d="M28 430.7 v-3.2 l-3.2 3.2z" fill="#b8b8b8"/>
<path d="M28 454.2 v-3.2 l-3.2 3.2z" fill="#b8b8b8"/>
<path d="M28 477.7 v-3.2 l-3.2 3.2z" fill="#b8b8b8"/>
<path d="M28 501.2 v-3.2 l-3.2 3.2z" fill="#b8b8b8"/>
<path d="M28 524.3 v-3.2 l-3.2 3.2z" fill="#b8b8b8"/>
<path d="M28 547.6 v-3.2 l-3.2 3.2z" fill="#b8b8b8"/>
<path d="M28 594.0 v-3.2 l-3.2 3.2z" fill="#b8b8b8"/>
<path d="M28 690.0 v-3.2 l-3.2 3.2z" fill="#b8b8b8"/>
<g stroke="#dedede" stroke-width="1.5" fill="none"><path d="M16.6 89.5 V100 M11.4 94.7 H21.9"/></g>
<path d="M16.6 87.6 l2.7 3 h-5.4z M16.6 101.8 l2.7 -3 h-5.4z M9.6 94.7 l3 -2.7 v5.4z M23.7 94.7 l-3 -2.7 v5.4z" fill="#dedede"/>
<rect x="10.6" y="111.6" width="13" height="11" fill="none" stroke="#dedede" stroke-width="1.2" stroke-dasharray="2.6 1.6"/>
<g transform="translate(9.6 133.0) scale(1.00)" fill="none" stroke="#dedede" stroke-width="1.25" stroke-linejoin="miter"><path d="M6.2 10.2 L1.2 2.2 L8.2 5.8 L14 0.8 L13.2 9.4 L8.4 9.8"/><circle cx="7" cy="10.6" r="1.5"/><path d="M6 11.8 L1.2 13.6 M7.4 12 L5.2 14.6"/></g>
<path d="M11.2 170.4 L19.8 161.2" stroke="#dedede" stroke-width="2.6" stroke-linecap="round"/>
<path d="M18.4 162.8 l1.6 1.5" stroke="#535353" stroke-width="0.8"/>
<path d="M16.5 157 v3 M15 158.5 h3 M23 156.8 v3.4 M21.3 158.5 h3.4 M24.3 162.3 v2.6 M23 163.6 h2.6" stroke="#dedede" stroke-width="1"/>
<path d="M12.8 179.6 V191.3 H24.3 M8.6 183.4 H20.6 V195" stroke="#dedede" stroke-width="1.6" fill="none"/>
<rect x="10.7" y="205.7" width="13.6" height="10.8" fill="none" stroke="#dedede" stroke-width="1.3"/><path d="M10.7 205.7 L24.3 216.5 M24.3 205.7 L10.7 216.5" stroke="#dedede" stroke-width="1.1"/>
<path d="M11 240.6 L18.6 232.6" stroke="#dedede" stroke-width="3.4" stroke-linecap="round"/><path d="M11.2 240.4 L17.6 233.6" stroke="#535353" stroke-width="1.2" stroke-linecap="round"/>
<path d="M16.6 230.2 L22 235.6" stroke="#dedede" stroke-width="2.2" stroke-linecap="round"/><path d="M19.5 232.6 L22.5 229.4" stroke="#dedede" stroke-width="3.2" stroke-linecap="round"/>
<g transform="rotate(-45 17.3 257.8)"><rect x="9.3" y="254.3" width="16" height="7" rx="1.2" fill="#dedede"/><rect x="14.3" y="254.9" width="6" height="5.8" fill="#535353"/><rect x="15.2" y="255.7" width="1.8" height="1.8" fill="#dedede"/><rect x="17.7" y="255.7" width="1.8" height="1.8" fill="#dedede"/><rect x="15.2" y="258.1" width="1.8" height="1.8" fill="#dedede"/><rect x="17.7" y="258.1" width="1.8" height="1.8" fill="#dedede"/></g>
<path d="M10 257 A4 4 0 0 1 15.5 251" fill="none" stroke="#dedede" stroke-width="1" stroke-dasharray="1.2 1.2"/>
<path d="M23.6 274.6 L22.4 274.2 L15.4 282.2 L17.6 284 L24 276.2 Z" fill="#dedede"/><path d="M9.8 288.6 C11.8 288.2 10.8 284.2 14 283 C16.6 282.4 18 284.8 16.6 286.8 C14.8 289.2 11.8 289.2 9.8 288.6z" fill="#dedede"/>
<circle cx="17.5" cy="300.4" r="2.9" fill="#dedede"/><path d="M16.2 302 h2.6 l0.5 3.2 C22 305.4 23.4 306.6 23.4 309 H11.6 C11.6 306.6 13 305.4 15.7 305.2z M12 310.2 h11 v1.1 h-11z" fill="#dedede"/>
<path d="M24 321.6 L22.8 321.2 L16.6 328.4 L18.6 330 L24.4 323 Z" fill="#dedede"/><path d="M10.8 335.2 C12.6 334.8 11.8 331 14.8 329.8 C17.2 329.4 18.6 331.6 17.2 333.4 C15.6 335.6 12.8 335.8 10.8 335.2z" fill="#dedede"/>
<path d="M11.4 325.6 A5.4 5.4 0 0 1 18.4 322.8" fill="none" stroke="#dedede" stroke-width="1.3"/><path d="M8.8 326.6 l4.6 -2.8 l0.4 3.6z" fill="#dedede"/><path d="M21.6 327 A6 6 0 0 1 19.8 333.4" fill="none" stroke="#dedede" stroke-width="1" stroke-dasharray="1 1.2"/>
<path d="M18.6 346.3 L24 350 L18.3 356.8 L12.8 356.8 L11 354.6 Z" fill="#dedede"/><path d="M12.4 354.2 L14.8 351.2 L18.2 354.4 L16.6 356 L13.8 356 Z" fill="#535353"/><path d="M12 357.4 H24" stroke="#dedede" stroke-width="1"/>
<rect x="10.2" y="368.2" width="13.8" height="11.6" fill="url(#gr)" stroke="#dedede" stroke-width="1.1"/>
<path d="M12.6 398.2 C12.4 394.6 14.4 392.2 18.4 392.2 C21.6 392.2 23 393.8 22.9 396.6 C22.8 399 22.2 400.6 20.8 401.6 L19.6 401.8 L18.2 403 L16.4 402 L17.6 398.4 L14.8 398.6 Z" fill="#dedede"/><path d="M12.2 404.6 L17.4 398.6" stroke="#dedede" stroke-width="2.3" stroke-linecap="round"/><path d="M18.6 401.4 l1.6 -2.2" stroke="#535353" stroke-width="0.7"/>
<circle cx="18.8" cy="420" r="4.5" fill="#dedede"/><path d="M15.6 423.4 L10.4 428.6" stroke="#dedede" stroke-width="1.8" stroke-linecap="round"/>
<g transform="rotate(45 17.5 445)"><path d="M14.6 438.4 h5.8 v2.6 h-5.8z" fill="#dedede"/><path d="M14.4 442 h6.2 L22 446.5 L17.5 454 L13 446.5z" fill="none" stroke="#dedede" stroke-width="1.45"/><path d="M17.5 453 V447.5" stroke="#dedede" stroke-width="0.9"/><circle cx="17.5" cy="446.8" r="1" fill="#dedede"/></g>
<path d="M12.2 462.6 H23.4 V466 H22.4 L22 464 H18.9 V473.2 L20.6 473.6 V474.6 H15 V473.6 L16.7 473.2 V464 H13.6 L13.2 466 H12.2Z" fill="#dedede"/>
<path d="M13.6 485.8 V497.2 L16.4 494.6 L18.4 498.8 L20.2 498 L18.3 493.9 L22 493.6 Z" fill="#111" stroke="#dedede" stroke-width="1.1" stroke-linejoin="round"/>
<rect x="10.5" y="509.2" width="13.3" height="10.8" fill="#6c6c6c" stroke="#dedede" stroke-width="1.1"/>
<g transform="translate(17 0) scale(1.17 1.03) translate(-16.3 -16)"><path d="M13.6 545.4 C12.4 543.6 11 541.4 9.8 540 C9.4 539 10.6 538.2 11.6 539 L13.4 540.8 V534.4 C13.4 533.4 15 533.4 15 534.4 V538.4 H15.6 V532.8 C15.6 531.8 17.3 531.8 17.3 532.8 V538.4 H17.9 V533.4 C17.9 532.4 19.6 532.4 19.6 533.4 V538.8 H20.2 V535.4 C20.2 534.4 21.9 534.4 21.9 535.4 V541.6 C21.9 543.4 21.2 544.4 20.6 545.4 Z" fill="#dedede"/></g>
<circle cx="15.2" cy="561" r="4.9" fill="none" stroke="#dedede" stroke-width="1.5"/><path d="M18.8 564.6 L23.4 569" stroke="#dedede" stroke-width="2" stroke-linecap="round"/><path d="M13 559.4 A3 3 0 0 1 16 558" stroke="#dedede" stroke-width="0.8" fill="none"/>
<circle cx="11.4" cy="585.4" r="1.85" fill="#dedede"/>
<circle cx="17.0" cy="585.4" r="1.85" fill="#dedede"/>
<circle cx="22.5" cy="585.4" r="1.85" fill="#dedede"/>
<rect x="6.4" y="605" width="6.2" height="6.2" fill="#e6e6e6"/><rect x="3.6" y="602.4" width="6" height="6" fill="#0a0a0a" stroke="#e6e6e6" stroke-width="1"/>
<path d="M21 604.4 H25.4 V609.6" fill="none" stroke="#dedede" stroke-width="1.2"/><path d="M19 604.4 l2.8 -2.4 v4.8z M25.4 612 l-2.4 -2.8 h4.8z" fill="#dedede"/>
<rect x="12.3" y="626" width="16.6" height="16" fill="#0c0c0c" stroke="#f0f0f0" stroke-width="1"/><rect x="11.3" y="625" width="18.6" height="18" fill="none" stroke="#2c2c2c" stroke-width="1"/>
<rect x="2.8" y="616.6" width="17.5" height="16.6" fill="#fff" stroke="#2c2c2c" stroke-width="0.8"/>
<rect x="9.3" y="653.2" width="14.4" height="11" fill="none" stroke="#dedede" stroke-width="1.1"/><circle cx="16.5" cy="658.7" r="3.3" fill="none" stroke="#dedede" stroke-width="1" stroke-dasharray="1 1"/>
<rect x="13.2" y="676.5" width="10.6" height="7" fill="#535353" stroke="#dedede" stroke-width="1.1"/><rect x="9.3" y="680" width="10.4" height="7" fill="#535353" stroke="#dedede" stroke-width="1.1"/><rect x="13.2" y="676.5" width="10.6" height="7" fill="#606060" stroke="#dedede" stroke-width="1.1"/>
</svg>
<span class="tx" id="t0" style="left:31.2px;top:8.8px;font-size:11.5px;font-weight:normal;color:#e8e8e8;transform:scaleX(0.8418);-webkit-text-stroke:0.3px #e8e8e8">File</span>
<span class="tx" id="t1" style="left:57.3px;top:8.8px;font-size:11.5px;font-weight:normal;color:#e8e8e8;transform:scaleX(0.9431);-webkit-text-stroke:0.3px #e8e8e8">Edit</span>
<span class="tx" id="t2" style="left:86.5px;top:8.8px;font-size:11.5px;font-weight:normal;color:#e8e8e8;transform:scaleX(0.9384);-webkit-text-stroke:0.3px #e8e8e8">Image</span>
<span class="tx" id="t3" style="left:127.0px;top:8.8px;font-size:11.5px;font-weight:normal;color:#e8e8e8;transform:scaleX(0.8686);-webkit-text-stroke:0.3px #e8e8e8">Layer</span>
<span class="tx" id="t4" style="left:162.6px;top:8.8px;font-size:11.5px;font-weight:normal;color:#e8e8e8;transform:scaleX(0.8982);-webkit-text-stroke:0.3px #e8e8e8">Type</span>
<span class="tx" id="t5" style="left:195.8px;top:8.8px;font-size:11.5px;font-weight:normal;color:#e8e8e8;transform:scaleX(0.9009);-webkit-text-stroke:0.3px #e8e8e8">Select</span>
<span class="tx" id="t6" style="left:235.0px;top:8.8px;font-size:11.5px;font-weight:normal;color:#e8e8e8;transform:scaleX(0.8998);-webkit-text-stroke:0.3px #e8e8e8">Filter</span>
<span class="tx" id="t7" style="left:269.0px;top:8.8px;font-size:11.5px;font-weight:normal;color:#e8e8e8;transform:scaleX(0.9318);-webkit-text-stroke:0.3px #e8e8e8">3D</span>
<span class="tx" id="t8" style="left:293.5px;top:8.8px;font-size:11.5px;font-weight:normal;color:#e8e8e8;transform:scaleX(0.9102);-webkit-text-stroke:0.3px #e8e8e8">View</span>
<span class="tx" id="t9" style="left:326.3px;top:8.8px;font-size:11.5px;font-weight:normal;color:#e8e8e8;transform:scaleX(0.9705);-webkit-text-stroke:0.3px #e8e8e8">Window</span>
<span class="tx" id="t10" style="left:377.0px;top:8.8px;font-size:11.5px;font-weight:normal;color:#e8e8e8;transform:scaleX(0.9215);-webkit-text-stroke:0.3px #e8e8e8">Help</span>
<span class="tx" id="t11" style="left:210.5px;top:35.9px;font-size:9.4px;font-weight:normal;color:#dcdcdc;transform:scaleX(0.9221)">Feather:</span>
<span class="tx" id="t12" style="left:253.0px;top:35.9px;font-size:9.4px;font-weight:normal;color:#e0e0e0;transform:scaleX(0.9417)">0 px</span>
<span class="tx" id="t13" style="left:318.0px;top:35.9px;font-size:9.4px;font-weight:normal;color:#e0e0e0;transform:scaleX(0.9076)">Anti-alias</span>
<span class="tx" id="t14" style="left:389.0px;top:35.9px;font-size:9.4px;font-weight:normal;color:#e8e8e8;transform:scaleX(0.9374)">Select and Mask...</span>
<span class="tx" id="t15" style="left:44.8px;top:64.3px;font-size:10px;font-weight:bold;color:#a4a4a4;transform:scaleX(0.9931)">Untitled-1 @ 16.7% (Layer 1, RG...</span>
<span class="tx" id="t16" style="left:240.7px;top:64.3px;font-size:10px;font-weight:bold;color:#a4a4a4;transform:scaleX(0.9890)">watercolor leaf 1.png @ 50% (La...</span>
<span class="tx" id="t17" style="left:435.6px;top:64.3px;font-size:10px;font-weight:bold;color:#a4a4a4;transform:scaleX(0.9909)">watercolor leaf 2.png @ 50% (La...</span>
<span class="tx" id="t18" style="left:631.5px;top:64.3px;font-size:10px;font-weight:bold;color:#ffffff;transform:scaleX(0.9813)">watercolor leaf 3.png @ 50% (Layer 1, RGB/8)</span>
<span class="tx" id="t19" style="left:875.9px;top:64.3px;font-size:10px;font-weight:bold;color:#a4a4a4;transform:scaleX(0.9890)">watercolor leaf 4.png @ 50% (La...</span>
<span class="tx" id="t20" style="left:51.0px;top:161.4px;font-size:10.3px;font-weight:bold;color:#1c1c1c;transform:scaleX(0.9117)">Polygonal Lasso tool (L)</span>
<span class="tx" id="t21" style="left:51.0px;top:180.8px;font-size:10px;font-weight:normal;color:#4a4a4a;transform:scaleX(0.9632)">Creates straight-edged selections</span>
</div></body></html>
